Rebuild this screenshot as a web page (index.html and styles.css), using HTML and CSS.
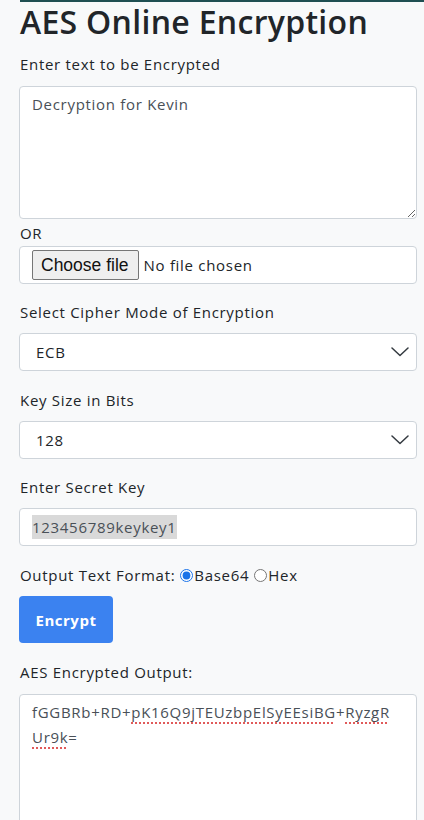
FILE: index.html
```html
<!DOCTYPE html>
<html lang="en">
<head>
<meta charset="utf-8">
<title>AES Online Encryption</title>
<link rel="stylesheet" href="styles.css">
</head>
<body>
<div class="topline"></div>
<main class="wrap">
  <h1 class="title">AES Online Encryption</h1>

  <div class="label">Enter text to be Encrypted</div>
  <div class="box area area-in">Decryption for Kevin</div>
  <div class="label or">OR</div>
  <div class="box filebox">
    <span class="filebtn">Choose file</span>
    <span class="filetxt">No file chosen</span>
  </div>

  <div class="group">
    <div class="label">Select Cipher Mode of Encryption</div>
    <div class="box select">
      <span>ECB</span>
      <svg class="chev" width="18" height="10" viewBox="0 0 18 10"><path d="M1 1 L9 8.5 L17 1" fill="none" stroke="#343a40" stroke-width="1.5" stroke-linecap="round" stroke-linejoin="round"/></svg>
    </div>
  </div>

  <div class="group group-wide">
    <div class="label">Key Size in Bits</div>
    <div class="box select">
      <span>128</span>
      <svg class="chev" width="18" height="10" viewBox="0 0 18 10"><path d="M1 1 L9 8.5 L17 1" fill="none" stroke="#343a40" stroke-width="1.5" stroke-linecap="round" stroke-linejoin="round"/></svg>
    </div>
  </div>

  <div class="group">
    <div class="label">Enter Secret Key</div>
    <div class="box keybox"><span class="sel">123456789keykey1</span></div>
  </div>

  <div class="format">
    <span>Output Text Format:</span>
    <label class="radio"><input type="radio" name="fmt" checked>Base64</label>
    <label class="radio"><input type="radio" name="fmt">Hex</label>
  </div>
  <button class="btn">Encrypt</button>

  <div class="label out-label">AES Encrypted Output:</div>
  <div class="box area area-out">fGGBRb+RD+<span class="sp">pK16Q9jTEUzbpElSyEEsiBG</span>+<span class="sp">RyzgR</span><br><span class="sp">Ur9k</span>=</div>
</main>
</body>
</html>
```

FILE: styles.css
```css
html, body {
  margin: 0;
  padding: 0;
  background: #f8f9fa;
}
body {
  font-family: "Open Sans", "Noto Sans", sans-serif;
  color: #212529;
  font-size: 15px;
  letter-spacing: 0.7px;
  overflow: hidden;
}
.topline {
  margin-left: 20px;
  height: 2px;
  background: #1f4f52;
}
.wrap {
  padding: 0 7px 0 19px;
}
.title {
  margin: 0;
  font-size: 32px;
  font-weight: 600;
  line-height: 40px;
  padding-left: 1px;
  letter-spacing: 0.3px;
}
.label {
  line-height: 24px;
  margin-top: 10px;
  margin-bottom: 10px;
  padding-left: 1px;
}
.box {
  box-sizing: border-box;
  background: #fff;
  border: 1px solid #ced4da;
  border-radius: 4px;
  color: #495057;
}
.area {
  padding: 5px 12px 6px;
  line-height: 25px;
  overflow: auto;
  resize: both;
}
.area-in { height: 133px; }
.area-out { height: 140px; }
.or {
  margin-top: 2px;
  margin-bottom: 1px;
}
.filebox {
  height: 38px;
  display: flex;
  align-items: center;
  padding: 0 12px;
}
.filebtn {
  font-family: "Liberation Sans", Arial, sans-serif;
  font-size: 17.5px;
  letter-spacing: 0;
  color: #111;
  background: #efefef;
  border: 1px solid #767676;
  border-radius: 2px;
  padding: 0 9px 0 8px;
  height: 30px;
  box-sizing: border-box;
  display: inline-flex;
  align-items: center;
  margin-right: 5px;
}
.filetxt { color: #212529; }
.group .label { margin-top: 16px; margin-bottom: 9px; }
.group-wide .label { margin-top: 17px; }
.select {
  height: 38px;
  display: flex;
  align-items: center;
  justify-content: space-between;
  padding: 0 7px 0 16px;
  color: #212529;
}
.keybox {
  height: 38px;
  display: flex;
  align-items: center;
  padding: 0 12px;
}
.sel { background: #d9d9d9; line-height: 24px; }
.format {
  margin-top: 17px;
  line-height: 24px;
  display: flex;
  align-items: center;
  padding-left: 1px;
}
.radio {
  display: inline-flex;
  align-items: center;
}
.radio input { margin: 0 1px 0 5px; accent-color: #1a73e8; width: 13px; height: 13px; }
.btn {
  margin-top: 9px;
  width: 94px;
  height: 47px;
  border: none;
  border-radius: 4px;
  background: #3b82f0;
  color: #fff;
  font-family: inherit;
  font-size: 15px;
  letter-spacing: 0.5px;
  font-weight: 700;
  display: block;
}
.out-label { margin-top: 17px; margin-bottom: 10px; }
.sp {
  text-decoration: underline dotted #e05a5a;
  text-decoration-thickness: 2px;
  text-underline-offset: 4px;
}
```
